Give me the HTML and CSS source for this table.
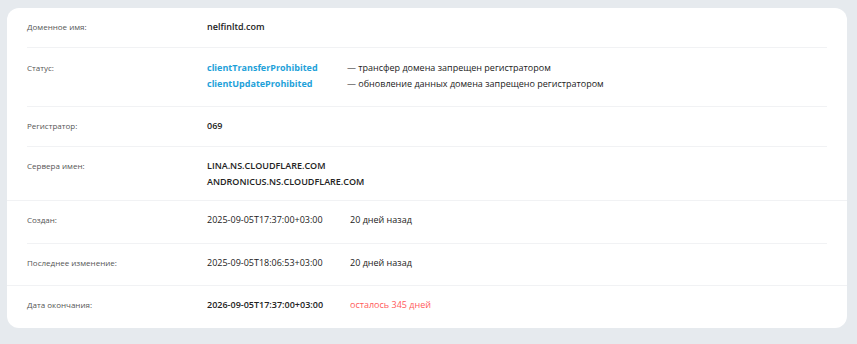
FILE: index.html
```html
<!DOCTYPE html>
<html lang="ru">
<head>
<meta charset="utf-8">
<link rel="stylesheet" href="styles.css">
</head>
<body>
<div class="card">
  <div class="section">
    <div class="row">
      <div class="label">Доменное имя:</div>
      <div class="value bold">nelfinltd.com</div>
    </div>
    <div class="row row-status">
      <div class="label">Статус:</div>
      <div class="value">
        <div class="status-line"><span class="status-code">clientTransferProhibited</span><span class="status-desc">— трансфер домена запрещен регистратором</span></div>
        <div class="status-line"><span class="status-code">clientUpdateProhibited</span><span class="status-desc">— обновление данных домена запрещено регистратором</span></div>
      </div>
    </div>
    <div class="row">
      <div class="label">Регистратор:</div>
      <div class="value bold">069</div>
    </div>
    <div class="row row-ns">
      <div class="label">Сервера имен:</div>
      <div class="value bold">
        <div>LINA.NS.CLOUDFLARE.COM</div>
        <div>ANDRONICUS.NS.CLOUDFLARE.COM</div>
      </div>
    </div>
  </div>
  <div class="section section-dates">
    <div class="row">
      <div class="label">Создан:</div>
      <div class="value"><span class="date">2025-09-05T17:37:00+03:00</span><span class="ago">20 дней назад</span></div>
    </div>
    <div class="row">
      <div class="label">Последнее изменение:</div>
      <div class="value"><span class="date">2025-09-05T18:06:53+03:00</span><span class="ago">20 дней назад</span></div>
    </div>
  </div>
  <div class="section section-expire">
    <div class="row">
      <div class="label">Дата окончания:</div>
      <div class="value"><span class="date bold">2026-09-05T17:37:00+03:00</span><span class="ago left">осталось 345 дней</span></div>
    </div>
  </div>
</div>
</body>
</html>
```
FILE: styles.css
```css
html, body {
  margin: 0;
  padding: 0;
}
body {
  background: #e6eaee;
  font-family: "Open Sans", "Noto Sans", sans-serif;
  color: #222;
  padding: 8px 10px 0 7px;
}
.card {
  background: #fff;
  border-radius: 12px;
  width: 840px;
  height: 320px;
  box-sizing: border-box;
}
.section {
  padding: 0 20px;
}
.section + .section {
  border-top: 1px solid #f1f2f4;
}
.row {
  display: flex;
  padding: 11px 0 12px;
  line-height: 16px;
  font-size: 9px;
}
.section .row + .row {
  border-top: 1px solid #f1f2f4;
}
.label {
  width: 180px;
  flex: none;
  color: #555;
  font-size: 8px;
}
.value {
  color: #222;
}
.bold {
  font-weight: 600;
}
.row-status {
  padding-top: 12px;
  padding-bottom: 14px;
}
.row-ns {
  padding-bottom: 10px;
}
.status-line {
  display: flex;
}
.status-code {
  width: 140px;
  color: #1ea1d9;
  font-weight: 700;
}
.status-desc {
  color: #222;
}
.section-dates .row {
  padding-top: 11px;
  padding-bottom: 15px;
}
.section-dates .row + .row {
  padding-bottom: 14px;
}
.section-expire .row {
  padding-top: 11px;
}
.date {
  display: inline-block;
  width: 143px;
}
.left {
  color: #ff5a5a;
}
```
